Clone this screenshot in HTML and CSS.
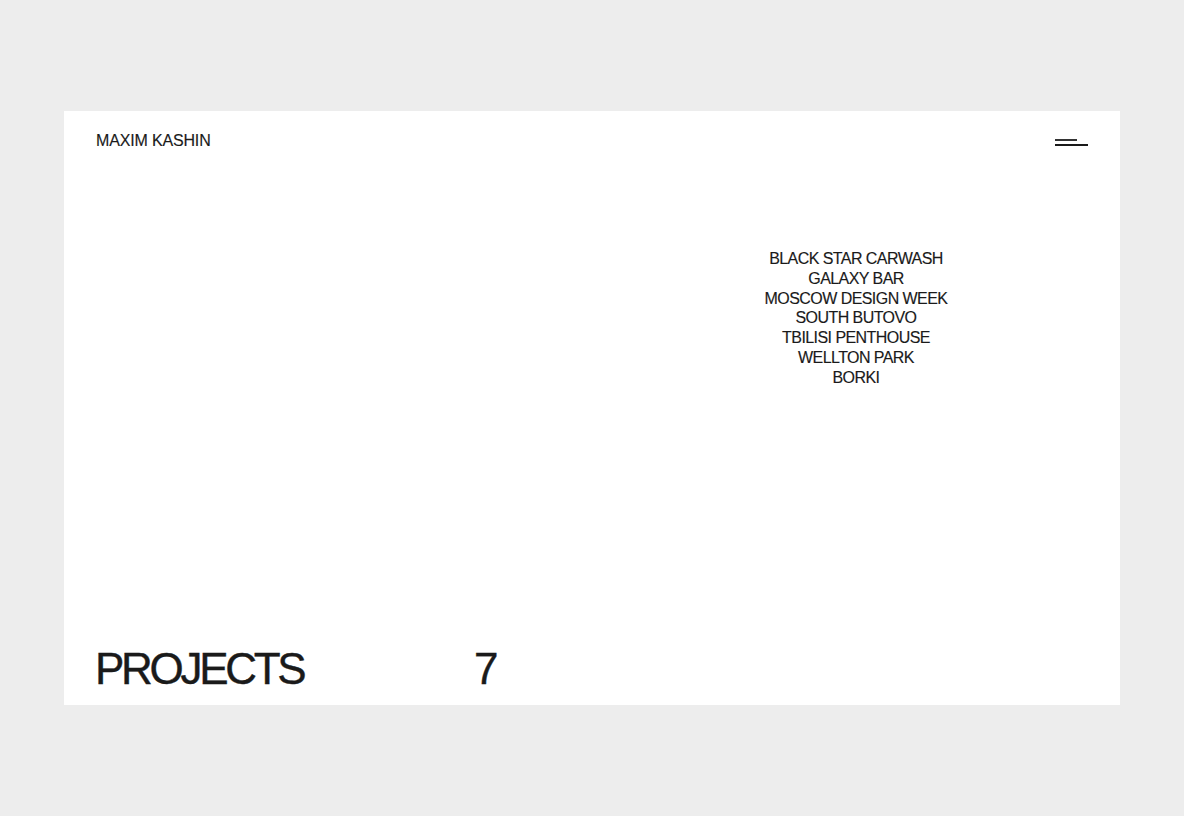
FILE: index.html
```html
<!DOCTYPE html>
<html lang="en">
<head>
<meta charset="utf-8">
<title>Maxim Kashin — Projects</title>
<link rel="stylesheet" href="styles.css">
</head>
<body>
<div class="page">
  <section class="card">
    <header class="topbar">
      <div class="brand">MAXIM KASHIN</div>
      <button class="menu" aria-label="Menu">
        <span class="menu-line short"></span>
        <span class="menu-line long"></span>
      </button>
    </header>
    <div class="middle">
      <div class="spacer"></div>
      <ul class="projects">
        <li>BLACK STAR CARWASH</li>
        <li>GALAXY BAR</li>
        <li>MOSCOW DESIGN WEEK</li>
        <li>SOUTH BUTOVO</li>
        <li>TBILISI PENTHOUSE</li>
        <li>WELLTON PARK</li>
        <li>BORKI</li>
      </ul>
    </div>
    <footer class="footer">
      <h1 class="title">PROJECTS</h1>
      <div class="count">7</div>
    </footer>
  </section>
</div>
</body>
</html>
```

FILE: styles.css
```css
* { box-sizing: border-box; }
html, body {
  margin: 0;
  padding: 0;
  background: #ededed;
}
body {
  font-family: "Liberation Sans", Arial, Helvetica, sans-serif;
  color: #1a1a1a;
}
.page {
  padding: 111px 64px 0 64px;
}
.card {
  background: #ffffff;
  width: 1056px;
  height: 594px;
  display: flex;
  flex-direction: column;
}
.topbar {
  display: flex;
  justify-content: space-between;
  align-items: flex-start;
  padding: 20px 32px 0 32px;
}
.brand {
  font-size: 16px;
  line-height: 20px;
  letter-spacing: -0.01em;
  -webkit-text-stroke: 0.15px #1a1a1a;
}
.menu {
  border: 0;
  background: none;
  padding: 0;
  margin-top: 8px;
  width: 33px;
  display: flex;
  flex-direction: column;
  gap: 3.5px;
  cursor: pointer;
}
.menu-line {
  display: block;
  height: 1.5px;
  background: #1a1a1a;
}
.menu-line.short { width: 22px; background: #333; }
.menu-line.long { width: 33px; }
.middle {
  flex: 1;
  display: grid;
  grid-template-columns: 1fr 1fr;
  padding-top: 98px;
}
.projects {
  list-style: none;
  margin: 0;
  padding: 0;
  text-align: center;
  font-size: 16px;
  line-height: 19.8px;
  letter-spacing: -0.035em;
  -webkit-text-stroke: 0.15px #1a1a1a;
}
.footer {
  display: grid;
  grid-template-columns: 379px auto;
  align-items: end;
  padding: 0 32px 14px 31px;
}
.title {
  margin: 0;
  font-weight: normal;
  font-size: 44px;
  line-height: 44px;
  letter-spacing: -0.075em;
  -webkit-text-stroke: 0.4px #1a1a1a;
}
.count {
  font-size: 44px;
  line-height: 44px;
  letter-spacing: -0.04em;
  -webkit-text-stroke: 0.4px #1a1a1a;
}
```
